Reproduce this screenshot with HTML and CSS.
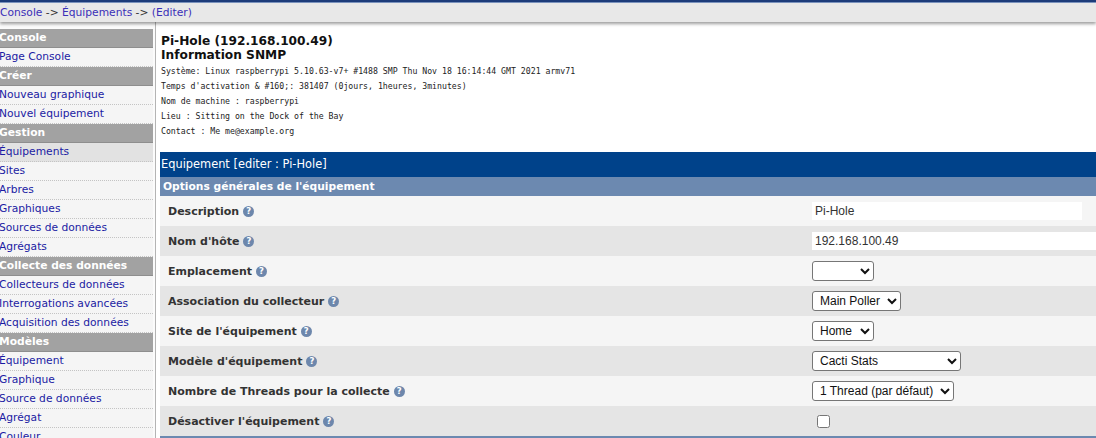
FILE: index.html
```html
<!DOCTYPE html>
<html lang="fr">
<head>
<meta charset="utf-8">
<title>Cacti - Equipement</title>
<link rel="stylesheet" href="styles.css">
</head>
<body>
<div class="topline"></div>
<div class="crumbs"><a class="crumb-link" href="#">Console</a> -&gt; <a class="crumb-link" href="#">Équipements</a> -&gt; <a class="crumb-link" href="#">(Editer)</a></div>
<div class="main">
  <nav class="sidebar">
    <div class="nav-head">Console</div>
    <a class="nav-item" href="#">Page Console</a>
    <div class="nav-head">Créer</div>
    <a class="nav-item" href="#">Nouveau graphique</a>
    <a class="nav-item" href="#">Nouvel équipement</a>
    <div class="nav-head">Gestion</div>
    <a class="nav-item selected" href="#">Équipements</a>
    <a class="nav-item" href="#">Sites</a>
    <a class="nav-item" href="#">Arbres</a>
    <a class="nav-item" href="#">Graphiques</a>
    <a class="nav-item" href="#">Sources de données</a>
    <a class="nav-item" href="#">Agrégats</a>
    <div class="nav-head">Collecte des données</div>
    <a class="nav-item" href="#">Collecteurs de données</a>
    <a class="nav-item" href="#">Interrogations avancées</a>
    <a class="nav-item" href="#">Acquisition des données</a>
    <div class="nav-head">Modèles</div>
    <a class="nav-item" href="#">Équipement</a>
    <a class="nav-item" href="#">Graphique</a>
    <a class="nav-item" href="#">Source de données</a>
    <a class="nav-item" href="#">Agrégat</a>
    <a class="nav-item" href="#">Couleur</a>
  </nav>
  <main class="content">
    <div class="dev-title">Pi-Hole (192.168.100.49)<br>Information SNMP</div>
    <div class="snmp">
      <div>Système: Linux raspberrypi 5.10.63-v7+ #1488 SMP Thu Nov 18 16:14:44 GMT 2021 armv71</div>
      <div>Temps d'activation &amp; #160;: 381407 (0jours, 1heures, 3minutes)</div>
      <div>Nom de machine : raspberrypi</div>
      <div>Lieu : Sitting on the Dock of the Bay</div>
      <div>Contact : Me me@example.org</div>
    </div>
    <div class="panel">
      <div class="panel-title">Equipement [editer : Pi-Hole]</div>
      <div class="panel-sub">Options générales de l'équipement</div>
      <div class="row odd">
        <div class="label">Description <span class="help">?</span></div>
        <div class="field"><input class="text desc" type="text" value="Pi-Hole"></div>
      </div>
      <div class="row even">
        <div class="label">Nom d'hôte <span class="help">?</span></div>
        <div class="field"><input class="text host" type="text" value="192.168.100.49"></div>
      </div>
      <div class="row odd">
        <div class="label">Emplacement <span class="help">?</span></div>
        <div class="field"><select class="sel w-empty"><option></option></select></div>
      </div>
      <div class="row even">
        <div class="label">Association du collecteur <span class="help">?</span></div>
        <div class="field"><select class="sel w-poller"><option>Main Poller</option></select></div>
      </div>
      <div class="row odd">
        <div class="label">Site de l'équipement <span class="help">?</span></div>
        <div class="field"><select class="sel w-home"><option>Home</option></select></div>
      </div>
      <div class="row even">
        <div class="label">Modèle d'équipement <span class="help">?</span></div>
        <div class="field"><select class="sel w-tpl"><option>Cacti Stats</option></select></div>
      </div>
      <div class="row odd">
        <div class="label">Nombre de Threads pour la collecte <span class="help">?</span></div>
        <div class="field"><select class="sel w-thr"><option>1 Thread (par défaut)</option></select></div>
      </div>
      <div class="row even">
        <div class="label">Désactiver l'équipement <span class="help">?</span></div>
        <div class="field"><input class="check" type="checkbox"></div>
      </div>
      <div class="panel-sub">Options SNMP</div>
    </div>
  </main>
</div>
</body>
</html>
```
FILE: styles.css
```css
html, body {
  margin: 0;
  padding: 0;
  background: #ffffff;
  overflow: hidden;
}
body {
  font-family: "DejaVu Sans", Verdana, sans-serif;
  font-size: 10.7px;
  color: #333333;
}
a { text-decoration: none; }

.topline {
  height: 2px;
  background: #1d3c7a;
  border-bottom: 1px solid #7d95c0;
}
.crumbs {
  height: 19px;
  line-height: 20px;
  background: #e8e8e8;
  color: #333;
  box-shadow: 0 2px 3px rgba(0, 0, 0, 0.38);
  position: relative;
  z-index: 1;
  padding-left: 0;
}
.crumb-link { color: #3a2fb8; }

.main {
  display: flex;
  align-items: stretch;
}
.sidebar {
  width: 153px;
  flex: none;
  padding-top: 7px;
  padding-right: 2px;
  border-right: 1px solid #b4b4b4;
  background: #fbfbfb;
  display: flex;
  flex-direction: column;
  min-height: 420px;
}
.nav-head {
  height: 18px;
  line-height: 18px;
  background: #a2a2a2;
  color: #ffffff;
  font-weight: bold;
  border-bottom: 1px solid #8e8e8e;
  text-indent: -1px;
  white-space: nowrap;
  overflow: hidden;
}
.nav-item {
  display: block;
  height: 18px;
  line-height: 18px;
  background: #f5f5f5;
  color: #1b1ba3;
  border-bottom: 1px dotted #c4c4c4;
  text-indent: -1px;
  white-space: nowrap;
  overflow: hidden;
}
.nav-item.selected { background: #e2e2e2; }

.content {
  flex: 1;
  min-width: 0;
  overflow: hidden;
  padding-top: 11px;
  padding-left: 4px;
}
.dev-title {
  font-weight: bold;
  font-size: 12.2px;
  line-height: 14px;
  color: #111;
  padding-left: 1px;
  padding-top: 1px;
}
.snmp {
  margin-top: 2px;
  padding-left: 1px;
  font-family: "DejaVu Sans Mono", "Liberation Mono", monospace;
  font-size: 8.2px;
  line-height: 15px;
  color: #222;
  white-space: nowrap;
}
.panel {
  margin-top: 13px;
}
.panel-title {
  height: 25px;
  line-height: 25px;
  background: #00428a;
  color: #ffffff;
  font-size: 11.4px;
  padding-left: 1px;
}
.panel-sub {
  height: 19px;
  line-height: 19px;
  background: #6c89b0;
  color: #ffffff;
  font-weight: bold;
  padding-left: 3px;
}
.row {
  display: grid;
  grid-template-columns: 652px 1fr;
  height: 30px;
  align-items: center;
}
.row.odd { background: #f5f5f5; }
.row.even { background: #e5e5e5; }
.label {
  padding-left: 8px;
  font-weight: bold;
  font-size: 11px;
  color: #333333;
  display: flex;
  align-items: center;
  gap: 4px;
  white-space: nowrap;
}
.help {
  display: inline-flex;
  align-items: center;
  justify-content: center;
  width: 11px;
  height: 11px;
  border-radius: 50%;
  background: #6d87ac;
  color: #ffffff;
  font-size: 8.5px;
  font-weight: bold;
  line-height: 11px;
}
.field {
  display: flex;
  align-items: center;
  white-space: nowrap;
}
.text {
  box-sizing: border-box;
  height: 18px;
  border: 0;
  background: #ffffff;
  padding: 0 3px;
  margin: 0;
  font-family: "Liberation Sans", Arial, sans-serif;
  font-size: 12px;
  color: #333333;
  outline: none;
}
.desc { width: 270px; }
.host { width: 300px; }
.sel {
  box-sizing: border-box;
  height: 20px;
  margin: 0;
  padding: 0 0 0 3px;
  border: 1px solid #767676;
  border-radius: 3px;
  background-color: #ffffff;
  font-family: "Liberation Sans", Arial, sans-serif;
  font-size: 12px;
  color: #111;
}
.w-empty { width: 62px; }
.w-poller { width: 89px; }
.w-home { width: 62px; }
.w-tpl { width: 149px; }
.w-thr { width: 142px; }
.check {
  width: 13px;
  height: 13px;
  margin: 0 0 0 5px;
}
```
